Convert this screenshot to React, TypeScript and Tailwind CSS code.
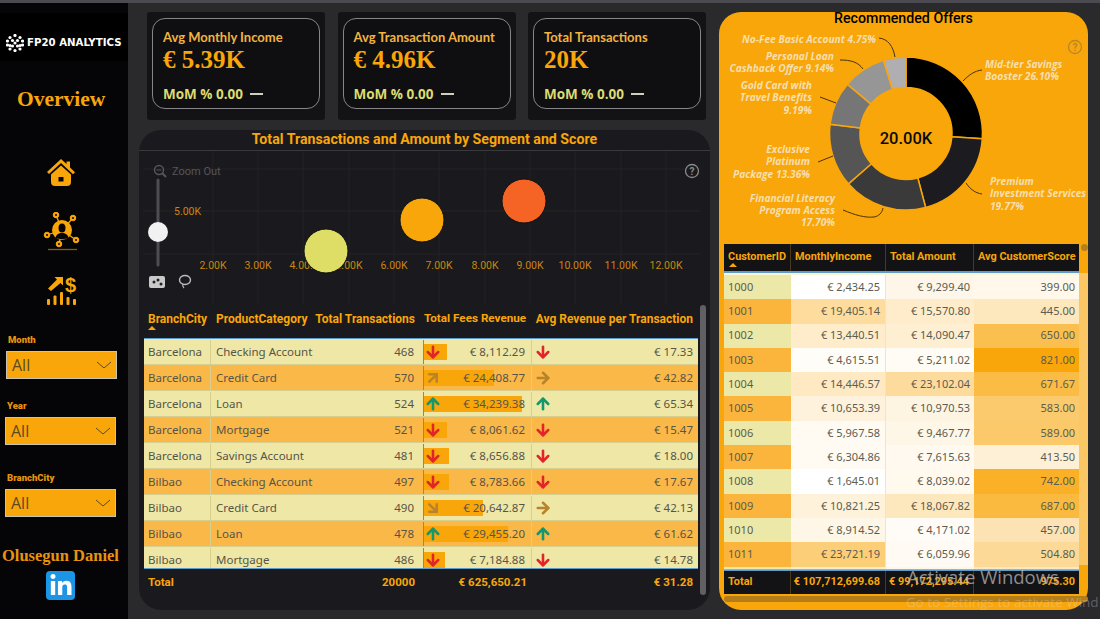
import { ArrowUp } from "lucide-react";
import { FaLinkedinIn } from "react-icons/fa";

const ORANGE = "#f9a60a";

const kpis = [
  { label: "Avg Monthly Income", value: "€ 5.39K" },
  { label: "Avg Transaction Amount", value: "€ 4.96K" },
  { label: "Total Transactions", value: "20K" },
];

const filters = [
  { name: "Month", wrap: "mt-[28px] ml-[6px]" },
  { name: "Year", wrap: "mt-[21px] ml-[5px]" },
  { name: "BranchCity", wrap: "mt-[27px] ml-[5px]" },
];

const segRows = [
  ["Barcelona", "Checking Account", "468", 8112.29, "€ 8,112.29", "down", "down", "€ 17.33"],
  ["Barcelona", "Credit Card", "570", 24408.77, "€ 24,408.77", "upright", "right", "€ 42.82"],
  ["Barcelona", "Loan", "524", 34239.38, "€ 34,239.38", "up", "up", "€ 65.34"],
  ["Barcelona", "Mortgage", "521", 8061.62, "€ 8,061.62", "down", "down", "€ 15.47"],
  ["Barcelona", "Savings Account", "481", 8656.88, "€ 8,656.88", "down", "down", "€ 18.00"],
  ["Bilbao", "Checking Account", "497", 8783.66, "€ 8,783.66", "down", "down", "€ 17.67"],
  ["Bilbao", "Credit Card", "490", 20642.87, "€ 20,642.87", "downright", "right", "€ 42.13"],
  ["Bilbao", "Loan", "478", 29455.2, "€ 29,455.20", "up", "up", "€ 61.62"],
  ["Bilbao", "Mortgage", "486", 7184.88, "€ 7,184.88", "down", "down", "€ 14.78"],
] as const;

const customers = [
  [1000, 2434.25, 9299.4, 399],
  [1001, 19405.14, 15570.8, 445],
  [1002, 13440.51, 14090.47, 650],
  [1003, 4615.51, 5211.02, 821],
  [1004, 14446.57, 23102.04, 671.67],
  [1005, 10653.39, 10970.53, 583],
  [1006, 5967.58, 9467.77, 589],
  [1007, 6304.86, 7615.63, 413.5],
  [1008, 1645.01, 8039.02, 742],
  [1009, 10821.25, 18067.82, 687],
  [1010, 8914.52, 4171.02, 457],
  [1011, 23721.19, 6059.96, 504.8],
];

const euro = (n: number) =>
  "€ " + n.toLocaleString("en-US", { minimumFractionDigits: 2, maximumFractionDigits: 2 });

// white -> orange, t between 0 and 1
const heat = (t: number) => {
  const mix = (a: number, b: number) => Math.round(a + (b - a) * t);
  return `rgb(${mix(255, 249)},${mix(255, 166)},${mix(255, 10)})`;
};
const incomeHeat = (v: number) => heat(Math.pow((v - 1645) / 22076, 1.5) * 0.55);
const amountHeat = (v: number) => heat(0.03 + Math.pow((v - 4171) / 18931, 1.4) * 0.37);
const scoreHeat = (v: number) => heat(0.08 + 0.92 * Math.pow((v - 399) / 422, 0.7));

function Trend({ dir }: { dir: string }) {
  if (dir === "down") return <ArrowUp size={18} strokeWidth={3.4} className="rotate-180 text-[#e2242a]" />;
  if (dir === "up") return <ArrowUp size={18} strokeWidth={3.4} className="text-[#13976f]" />;
  if (dir === "right") return <ArrowUp size={18} strokeWidth={3.4} className="rotate-90 text-[#b8832a]" />;
  if (dir === "upright") return <ArrowUp size={18} strokeWidth={3.4} className="rotate-45 text-[#b8832a]" />;
  return <ArrowUp size={18} strokeWidth={3.4} className="rotate-[135deg] text-[#b8832a]" />;
}

function LogoMark() {
  const dots = [
    [9, 1.5], [4, 3.5], [14, 3.5], [1.5, 7], [6.5, 6.5], [11.5, 6.5], [16.5, 7], [9, 9],
    [4, 11.5], [14, 11.5], [6.5, 12], [11.5, 12], [1.5, 11], [16.5, 11], [9, 16.5], [4, 15], [14, 15],
  ];
  return (
    <svg width="18" height="18" viewBox="0 0 18 18" className="shrink-0">
      {dots.map(([x, y]) => (
        <circle key={`${x}-${y}`} cx={x} cy={y} r="1.6" fill="#fff" />
      ))}
    </svg>
  );
}

function HomeIcon() {
  return (
    <svg width="28" height="27" viewBox="0 0 28 27" fill={ORANGE}>
      <path d="M0 13 14 0l5.500 5V2.500H23v6l5 4.700-2 2L14 4 2 15z" />
      <path d="M4 15.500 14 6.500l10 9V23a4 4 0 0 1-4 4H8a4 4 0 0 1-4-4zm7.500 2.500v4.500h5V18z" fillRule="evenodd" />
    </svg>
  );
}

function NetworkIcon() {
  const nodes = [[56, 215], [73, 218], [47, 235], [76, 240], [59, 244]];
  return (
    <svg width="40" height="40" viewBox="42 212 40 40" fill="none" stroke={ORANGE}>
      {nodes.map(([x, y]) => (
        <g key={x}>
          <line x1={x} y1={y} x2="62" y2="230" strokeWidth="1.300" />
          <circle cx={x} cy={y} r="2.800" fill={ORANGE} strokeWidth="1" />
          <circle cx={x} cy={y} r="1" fill="#050508" stroke="none" />
        </g>
      ))}
      <circle cx="62" cy="230" r="10" fill={ORANGE} stroke="none" />
      <ellipse cx="62" cy="228" rx="3.500" ry="4.500" fill="#050508" stroke="none" />
      <path d="M55.500 238c.5-3.500 3-5 6.500-5s6 1.500 6.500 5c-2 1.500-11 1.500-13 0z" fill="#050508" stroke="none" />
      <line x1="48" y1="249.500" x2="77" y2="249.500" strokeWidth="1.300" opacity="0.55" />
    </svg>
  );
}

function DollarIcon() {
  return (
    <svg width="30" height="31" viewBox="47 276 30 31" fill={ORANGE}>
      <path d="M48 289.500 57 280.500 54.500 278h8.500v8.500L60.500 284l-9.500 8z" />
      <text x="70.500" y="293" textAnchor="middle" fontSize="20" fontWeight="700" fontFamily="'Liberation Sans', sans-serif" fill={ORANGE}>$</text>
      <rect x="47" y="300" width="3" height="6" rx="1" />
      <rect x="53.500" y="296.500" width="3" height="9.500" rx="1" />
      <rect x="60" y="293" width="3" height="13" rx="1" />
      <rect x="66.500" y="298" width="3" height="8" rx="1" />
      <rect x="73" y="300" width="3" height="6" rx="1" />
    </svg>
  );
}

function Sidebar() {
  return (
    <aside className="flex h-[616px] w-[128px] shrink-0 flex-col bg-[#050508] pt-[10px]">
      <div className="flex h-[48px] items-center gap-[3px] bg-black pt-[12px] pl-[6px]">
        <LogoMark />
        <span className="whitespace-nowrap font-['DejaVu_Sans',sans-serif] text-[10.2px] font-bold text-white">
          FP20 ANALYTICS
        </span>
      </div>
      <h1 className="mt-[25px] pl-[17px] font-['Liberation_Serif',serif] text-[21.5px] leading-[26px] font-bold text-[#f9a60a]">
        Overview
      </h1>
      <div className="mt-[47px] pl-[47px]"><HomeIcon /></div>
      <div className="mt-[26px] pl-[42px]"><NetworkIcon /></div>
      <div className="mt-[23px] pl-[47px]"><DollarIcon /></div>
      {filters.map((f) => (
        <div key={f.name} className={f.wrap}>
          <div className="pl-[2px] font-['Roboto',sans-serif] text-[9.5px] leading-[12px] font-black text-[#e8940c]">{f.name}</div>
          <div className="mt-[5px] flex h-[28px] w-[111px] items-center justify-between border border-[#c9c3b4] bg-[#f9a60a] pr-[4px] pl-[5px] font-['Open_Sans',sans-serif] text-[16px] text-[#5b4a22]">
            All
            <svg width="16" height="8" viewBox="0 0 16 8" fill="none" stroke="#5b4a22" strokeWidth="1">
              <polyline points="1,1 8,7 15,1" />
            </svg>
          </div>
        </div>
      ))}
      <div className="mt-[29px] pl-[2px] font-['Liberation_Serif',serif] text-[16.5px] leading-[20px] font-bold whitespace-nowrap text-[#e8940c]">
        Olusegun Daniel
      </div>
      <div className="mt-[5px] ml-[46px] flex h-[29px] w-[29px] items-center justify-center rounded-[4px] bg-[#1c95e6]">
        <FaLinkedinIn size={24} color="#fff" />
      </div>
    </aside>
  );
}

function KpiCard({ label, value }: { label: string; value: string }) {
  return (
    <div className="h-[108px] w-[178px] rounded-[3px] bg-[#131316] px-[5px] pt-[6px]">
      <div className="h-[91px] rounded-[13px] border border-[#85858a] bg-[#0f0f12] pt-[11px] pl-[10px]">
        <div className="font-['Lato',sans-serif] text-[13px] leading-[15px] font-bold whitespace-nowrap text-[#f2b33f]">{label}</div>
        <div className="mt-[1px] font-['Liberation_Serif',serif] text-[25px] leading-[28px] font-bold text-[#f9a60a]">{value}</div>
        <div className="mt-[11px] flex items-center gap-[7px] font-['Open_Sans',sans-serif] text-[13.5px] leading-[18px] font-bold text-[#dcdc70]">
          MoM % 0.00
          <span className="h-[1.5px] w-[13px] bg-[#cfcfc0]" />
        </div>
      </div>
    </div>
  );
}

function BubbleChart() {
  const xLabels = ["2.00K", "3.00K", "4.00K", "5.00K", "6.00K", "7.00K", "8.00K", "9.00K", "10.00K", "11.00K", "12.00K"];
  const xs = [213, 258, 303, 349, 394, 439, 485, 530, 575, 621, 666];
  return (
    <svg width="571" height="155" viewBox="139 151 571 155" fontFamily="'Roboto', sans-serif" className="block">
      {xs.map((x) => (
        <line key={x} x1={x} y1="151" x2={x} y2="305" stroke="#232326" />
      ))}
      <line x1="143" y1="211" x2="700" y2="211" stroke="#262221" />
      <line x1="143" y1="169" x2="700" y2="169" stroke="#232222" />
      <line x1="143" y1="254" x2="700" y2="254" stroke="#232222" />
      <text x="174" y="215" fontSize="10.5" fill="#c9860c">5.00K</text>
      {xLabels.map((t, i) => (
        <text key={t} x={xs[i]} y="269" fontSize="10.500" textAnchor="middle" fill="#c9860c">{t}</text>
      ))}
      <circle cx="326" cy="251" r="22" fill="#dede66" stroke="#111" />
      <circle cx="422" cy="220" r="22" fill="#f9a60a" stroke="#111" />
      <circle cx="524" cy="201" r="22" fill="#f56425" stroke="#111" />
      {/* zoom slider */}
      <circle cx="159" cy="170" r="4.500" fill="none" stroke="#55555a" strokeWidth="1.500" />
      <line x1="156.500" y1="170" x2="161.500" y2="170" stroke="#55555a" />
      <line x1="162.500" y1="173.500" x2="166" y2="177" stroke="#55555a" strokeWidth="2" />
      <text x="172" y="175" fontSize="11" fill="#55555a">Zoom Out</text>
      <line x1="158" y1="180" x2="158" y2="265" stroke="#4d4d52" strokeWidth="3" strokeLinecap="round" />
      <circle cx="158" cy="232" r="10" fill="#f1f1f1" />
      <rect x="149" y="276" width="16" height="12" rx="2" fill="#c9c9c9" />
      <circle cx="154" cy="282" r="1.500" fill="#222" />
      <circle cx="158" cy="280" r="1.500" fill="#222" />
      <circle cx="161" cy="284" r="1.500" fill="#222" />
      <ellipse cx="185" cy="280" rx="5.500" ry="4.500" fill="none" stroke="#bbb" strokeWidth="1.400" />
      <path d="M183 284c-1 2 0 3 1 4" fill="none" stroke="#bbb" strokeWidth="1.200" />
      <circle cx="692" cy="171" r="6.500" fill="none" stroke="#8a8a8a" strokeWidth="1.300" />
      <text x="692" y="175" fontSize="10" fontWeight="700" textAnchor="middle" fill="#8a8a8a">?</text>
    </svg>
  );
}

function SegmentTable() {
  const cols = "grid grid-cols-[67px_104px_109px_108px_166px]";
  return (
    <div className="ml-[5px] w-[554px] font-['Noto_Sans',sans-serif]">
      <div className={`${cols} h-[32px] font-['Roboto',sans-serif] text-[12px] font-bold whitespace-nowrap text-[#f9a60a]`}>
        <div className="relative pt-[4px] pl-[4px]">
          BranchCity
          <span className="absolute top-[20px] left-[4px] h-0 w-0 border-x-[4px] border-b-[4px] border-x-transparent border-b-[#f9a60a]" />
        </div>
        <div className="pt-[4px] pl-[5px]">ProductCategory</div>
        <div className="pt-[4px] pr-[9px] text-right">Total Transactions</div>
        <div className="pt-[4px] pr-[7px] text-[11.7px] text-right">Total Fees Revenue</div>
        <div className="pt-[4px] pr-[5px] text-right">Avg Revenue per Transaction</div>
      </div>
      <div className="h-[231px] overflow-hidden border-y border-[#5f9bc9] text-[11.5px] text-[#55554a]">
        {segRows.map((r, i) => (
          <div key={r[0] + r[1]} className={`${cols} h-[26px] border-b border-[#d8cf8f] pt-px ${i % 2 === 0 ? "bg-[#efe7a5]" : "bg-[#fab848]"}`}>
            <div className="flex items-center border-r border-[#d8cf8f] pl-[4px]">{r[0]}</div>
            <div className="flex items-center pl-[5px]">{r[1]}</div>
            <div className="flex items-center justify-end border-r border-[#8f8a6a] pr-[9px]">{r[2]}</div>
            <div className="relative flex items-center justify-end border-r border-[#d8cf8f] pr-[6px]">
              <span
                className="absolute top-[4px] left-0 h-[16px] bg-[#f9a60a]"
                style={{ width: (Number(r[3]) / 34239.38) * 98 }}
              />
              <span className="absolute top-[3px] left-0"><Trend dir={r[5]} /></span>
              <span className="relative">{r[4]}</span>
            </div>
            <div className="relative flex items-center justify-end pr-[5px]">
              <span className="absolute top-[3px] left-[2px]"><Trend dir={r[6]} /></span>
              {r[7]}
            </div>
          </div>
        ))}
      </div>
      <div className={`${cols} h-[27px] items-center font-['Roboto',sans-serif] text-[11.5px] font-bold text-[#f9a60a]`}>
        <div className="pl-[4px]">Total</div>
        <div />
        <div className="pr-[9px] text-right">20000</div>
        <div className="pr-[5px] text-right">€ 625,650.21</div>
        <div className="pr-[5px] text-right">€ 31.28</div>
      </div>
    </div>
  );
}

function Donut() {
  const cx = 906;
  const cy = 133.5;
  const R = 76.5;
  const r = 46;
  const slices = [
    [26.1, "#000000"],
    [19.77, "#1c1c20"],
    [17.7, "#3a3a3a"],
    [13.36, "#555555"],
    [9.19, "#767676"],
    [9.14, "#969696"],
    [4.75, "#b0aeb0"],
  ] as const;
  let acc = 0;
  const pt = (rad: number, pct: number) => {
    const a = (pct / 100) * Math.PI * 2 - Math.PI / 2;
    return `${(cx + rad * Math.cos(a)).toFixed(2)} ${(cy + rad * Math.sin(a)).toFixed(2)}`;
  };
  const labels: [string, number, number, "start" | "end"][] = [
    ["No-Fee Basic Account 4.75%", 876, 43, "end"],
    ["Personal Loan", 834, 60, "end"],
    ["Cashback Offer 9.14%", 834, 72, "end"],
    ["Gold Card with", 812, 89, "end"],
    ["Travel Benefits", 812, 101, "end"],
    ["9.19%", 812, 114, "end"],
    ["Exclusive", 810, 153, "end"],
    ["Platinum", 810, 165, "end"],
    ["Package 13.36%", 810, 178, "end"],
    ["Financial Literacy", 835, 202, "end"],
    ["Program Access", 835, 214, "end"],
    ["17.70%", 835, 226, "end"],
    ["Mid-tier Savings", 985, 68, "start"],
    ["Booster 26.10%", 985, 80, "start"],
    ["Premium", 990, 185, "start"],
    ["Investment Services", 990, 197, "start"],
    ["19.77%", 990, 210, "start"],
  ];
  const leaders = [
    "M879 38c9 1 14 8 16 19",
    "M840 60c11 0 18 2 23 9",
    "M820 97l16 6",
    "M818 162l15-6",
    "M843 210c12 5 22 8 31 7 5-1 8-4 9-9",
    "M963 81c6-6 11-10 19-11",
    "M966 183c4 6 9 10 16 11",
  ];
  return (
    <svg width="369" height="219" viewBox="719 25 369 219" className="block">
      {slices.map(([pct, fill]) => {
        const s = acc;
        acc += pct;
        const big = pct > 50 ? 1 : 0;
        return (
          <path
            key={fill}
            d={`M${pt(R, s)}A${R} ${R} 0 ${big} 1 ${pt(R, acc)}L${pt(r, acc)}A${r} ${r} 0 ${big} 0 ${pt(r, s)}Z`}
            fill={fill}
            stroke={ORANGE}
            strokeWidth="1.500"
          />
        );
      })}
      {leaders.map((d) => (
        <path key={d} d={d} fill="none" stroke="#4a3208" strokeWidth="1" />
      ))}
      {labels.map(([t, x, y, anchor]) => (
        <text key={t} x={x} y={y} textAnchor={anchor} fontSize="10.2" fontWeight="700" fontStyle="italic" fontFamily="'Open Sans', sans-serif" fill="#f6dfb0">
          {t}
        </text>
      ))}
      <text x={cx} y="144" textAnchor="middle" fontSize="16.5" fontWeight="500" fontFamily="'Roboto', sans-serif" fill="#0a0a0a">20.00K</text>
      <circle cx="1075" cy="47" r="6.500" fill="none" stroke="#b9862a" strokeWidth="1.300" />
      <text x="1075" y="51" textAnchor="middle" fontSize="10" fontWeight="700" fontFamily="'Roboto', sans-serif" fill="#b9862a">?</text>
    </svg>
  );
}

function CustomerTable() {
  const cols = "grid grid-cols-[67px_95px_88px_105px]";
  return (
    <div className="relative ml-[5px] w-[364px]">
      <div className="absolute top-[29px] right-0 h-[292px] w-[9px] bg-[#fbc765]" />
      <span className="absolute top-[0px] right-[0px] h-[7px] w-[7px] rounded-full bg-[#b8801c]" />
      <div className={`${cols} h-[29px] w-[355px] border-b-2 border-[#5f9bc9] bg-[#131316] font-['Roboto',sans-serif] text-[10.9px] font-bold whitespace-nowrap text-[#f9a60a]`}>
        <div className="relative border-r border-[#4a3a1a] pt-[5px] pl-[4px]">
          CustomerID
          <span className="absolute top-[19px] left-[5px] h-0 w-0 border-x-[4px] border-b-[4px] border-x-transparent border-b-[#f9a60a]" />
        </div>
        <div className="border-r border-[#4a3a1a] pt-[5px] pl-[4px]">MonthlyIncome</div>
        <div className="border-r border-[#4a3a1a] pt-[5px] pl-[4px]">Total Amount</div>
        <div className="pt-[5px] pl-[4px]">Avg CustomerScore</div>
      </div>
      <div className="h-[296px] w-[355px] overflow-hidden bg-[#fdf3d6] pt-[2px] font-['Noto_Sans',sans-serif] text-[11px] text-[#5c5c50]">
        {customers.map((c, i) => (
          <div key={c[0]} className={`${cols} h-[24.3px]`}>
            <div className={`flex items-center pl-[4px] ${i % 2 === 0 ? "bg-[#ece8a8]" : "bg-[#fbb43c]"}`}>{c[0]}</div>
            <div className="flex items-center justify-end border-r border-[#fbe3b3] pr-[5px]" style={{ background: incomeHeat(c[1]) }}>{euro(c[1])}</div>
            <div className="flex items-center justify-end pr-[4px]" style={{ background: amountHeat(c[2]) }}>{euro(c[2])}</div>
            <div className="flex items-center justify-end pr-[4px]" style={{ background: scoreHeat(c[3]) }}>{c[3].toFixed(2)}</div>
          </div>
        ))}
        <div className={`${cols} h-[24.3px]`}>
          <div className="bg-[#ece8a8]" />
          <div className="bg-[#fdecc9]" />
          <div className="bg-[#fff6e4]" />
          <div className="bg-[#fde8c0]" />
        </div>
      </div>
      <div className={`${cols} mt-[1px] h-[24px] w-[355px] items-stretch border-t border-[#5f9bc9] bg-[#131316] font-['Roboto',sans-serif] text-[10.9px] font-bold whitespace-nowrap text-[#f9a60a]`}>
        <div className="flex items-center border-r border-[#4a3a1a] pl-[4px]">Total</div>
        <div className="flex items-center justify-end border-r border-[#4a3a1a] pr-[5px]">€ 107,712,699.68</div>
        <div className="flex items-center justify-end border-r border-[#4a3a1a] pr-[4px]">€ 99,172,295.44</div>
        <div className="flex items-center justify-end pr-[4px]">975.30</div>
      </div>
      <div className="mt-[2px] h-[6px] w-[364px] rounded-full bg-[#b57d18]" />
    </div>
  );
}

export default function App() {
  return (
    <div className="relative flex h-[619px] w-[1100px] overflow-hidden border-t-[3px] border-[#4a4a50] bg-[#2a2a2d]">
      <Sidebar />
      <main className="flex flex-1 gap-[9px] pl-[11px]">
        <div className="w-[571px] shrink-0">
          <div className="mt-[9px] ml-[8px] flex gap-[12.5px]">
            {kpis.map((k) => <KpiCard key={k.label} {...k} />)}
          </div>
          <section className="relative mt-[10px] h-[480px] rounded-[22px] bg-[#1a1a1e]">
            <h2 className="h-[21px] border-b border-[#3a3a3c] pt-[1px] text-center font-['Roboto',sans-serif] text-[14.2px] leading-[17px] font-bold text-[#f9a60a]">
              Total Transactions and Amount by Segment and Score
            </h2>
            <BubbleChart />
            <SegmentTable />
            <span className="absolute top-[175px] right-[4px] h-[290px] w-[6px] rounded-full bg-[#5f5f64]" />
          </section>
        </div>
        <section className="mt-[9px] h-[598px] w-[369px] shrink-0 rounded-[22px] bg-[#f9a60a]">
          <h2 className="h-[13px] text-center font-['Roboto',sans-serif] text-[14.2px] leading-[13px] font-medium text-black">
            Recommended Offers
          </h2>
          <Donut />
          <CustomerTable />
        </section>
      </main>
      {/* windows watermark sits over the table */}
      <div className="pointer-events-none absolute top-[563px] left-[907px] font-['Open_Sans',sans-serif] text-[18.5px] leading-[22px] whitespace-nowrap text-[#b9b9b9]/75">
        Activate Windows
      </div>
      <div className="pointer-events-none absolute top-[591px] left-[906px] font-['Open_Sans',sans-serif] text-[13.5px] leading-[16px] whitespace-nowrap text-[#e0e0e0]/30">
        Go to Settings to activate Wind
      </div>
    </div>
  );
}
